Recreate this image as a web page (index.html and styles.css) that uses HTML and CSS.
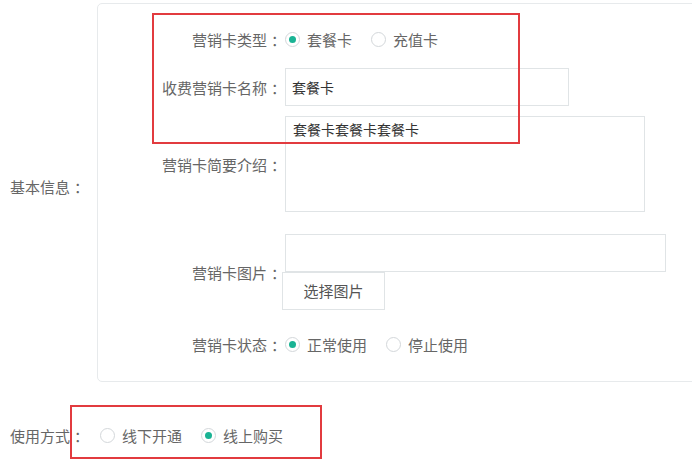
FILE: index.html
```html
<!DOCTYPE html>
<html lang="zh-CN">

<head>
    <meta charset="UTF-8">
    <meta name="viewport" content="width=device-width, initial-scale=1.0">
    <title>营销卡设置</title>
    <link rel="stylesheet" href="styles.css">
</head>

<body>
    <div class="page">
        <div class="group">
            <div class="group-label">基本信息<span class="colon">：</span></div>
            <div class="panel">
                <div class="row">
                    <div class="label">营销卡类型<span class="colon">：</span></div>
                    <div class="radios">
                        <span class="radio checked"></span><span class="opt">套餐卡</span>
                        <span class="radio"></span><span class="opt">充值卡</span>
                    </div>
                </div>
                <div class="row row-input">
                    <div class="label">收费营销卡名称<span class="colon">：</span></div>
                    <div class="input name">套餐卡</div>
                </div>
                <div class="row row-area">
                    <div class="label">营销卡简要介绍<span class="colon">：</span></div>
                    <div class="textarea">套餐卡套餐卡套餐卡</div>
                </div>
                <div class="row row-pic">
                    <div class="label">营销卡图片<span class="colon">：</span></div>
                    <div class="pic">
                        <div class="input path"></div>
                        <a href="javascript:;" class="btn">选择图片</a>
                    </div>
                </div>
                <div class="row row-status">
                    <div class="label">营销卡状态<span class="colon">：</span></div>
                    <div class="radios">
                        <span class="radio checked"></span><span class="opt">正常使用</span>
                        <span class="radio"></span><span class="opt">停止使用</span>
                    </div>
                </div>
            </div>
        </div>

        <div class="usage">
            <div class="usage-label">使用方式<span class="colon">：</span></div>
            <div class="radios">
                <span class="radio"></span><span class="opt">线下开通</span>
                <span class="radio checked"></span><span class="opt">线上购买</span>
            </div>
        </div>

        <!-- 标注框 -->
        <div class="mark mark-top"></div>
        <div class="mark mark-bottom"></div>
    </div>
</body>

</html>
```

FILE: styles.css
```css
* {
    margin: 0;
    padding: 0;
    box-sizing: border-box;
}

a {
    text-decoration: none;
}

body {
    width: 692px;
    height: 467px;
    overflow: hidden;
    background-color: #fff;
    font-family: "Noto Sans CJK SC", "Noto Sans", sans-serif;
    font-size: 15px;
    color: #666;
}

/* 冒号往右挪到格子中间 */
.colon {
    margin-left: 4px;
    margin-right: -4px;
}

.page {
    position: relative;
    padding: 3px 0 0 10px;
}

.group {
    display: flex;
    align-items: center;
}

.group-label {
    width: 87px;
    flex-shrink: 0;
    margin-top: -12px;
}

.panel {
    width: 620px;
    flex-shrink: 0;
    border: 1px solid #e7eaec;
    border-radius: 5px;
    padding: 17px 0 19px 0;
}

.row {
    display: flex;
    align-items: center;
    height: 36px;
}

.label {
    width: 187px;
    flex-shrink: 0;
    text-align: right;
    padding-right: 3px;
}

.row-input {
    height: 38px;
    margin-top: 11px;
}

.row-area {
    height: 96px;
    margin-top: 10px;
}

.row-pic {
    height: 76px;
    margin-top: 22px;
}

.row-status {
    margin-top: 16px;
}

.radios {
    display: flex;
    align-items: center;
}

.radio {
    position: relative;
    width: 15px;
    height: 15px;
    border: 1px solid #d3d7da;
    border-radius: 50%;
    background-color: #fff;
    margin-right: 7px;
}

.radio.checked::after {
    content: "";
    position: absolute;
    left: 3px;
    top: 3px;
    width: 7px;
    height: 7px;
    border-radius: 50%;
    background-color: #1ab394;
}

.opt {
    margin-right: 19px;
}

.input,
.textarea {
    border: 1px solid #e0e4e6;
    background-color: #fff;
    color: #333;
    font-size: 14px;
}

.input {
    height: 38px;
    line-height: 36px;
    padding-left: 6px;
}

.name {
    width: 284px;
}

.textarea {
    width: 360px;
    height: 96px;
    padding: 1px 7px;
    line-height: 22px;
}

.pic {
    display: flex;
    flex-direction: column;
}

.path {
    width: 381px;
}

.btn {
    display: block;
    width: 103px;
    height: 38px;
    line-height: 36px;
    margin-left: -3px;
    text-align: center;
    border: 1px solid #e0e4e6;
    background-color: #fff;
    color: #555;
}

.usage {
    display: flex;
    align-items: center;
    height: 36px;
    margin-top: 35px;
}

.usage-label {
    width: 90px;
    flex-shrink: 0;
}

.mark {
    position: absolute;
    border: 2px solid #e23b3f;
}

.mark-top {
    left: 152px;
    top: 13px;
    width: 368px;
    height: 131px;
}

.mark-bottom {
    left: 70px;
    top: 405px;
    width: 252px;
    height: 54px;
}
```
